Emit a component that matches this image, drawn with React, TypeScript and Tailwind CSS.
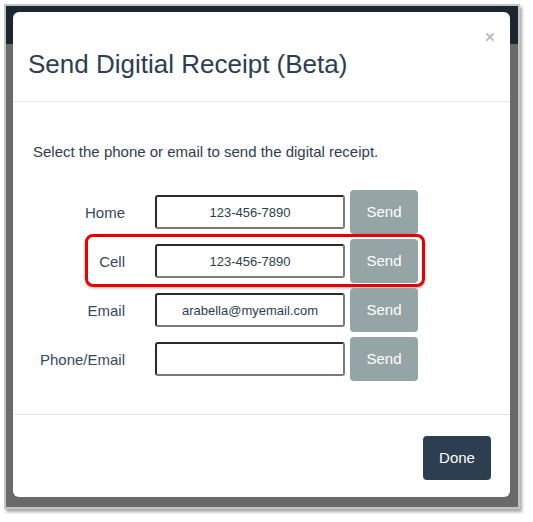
import { X } from 'lucide-react'

const ROWS = [
  { label: 'Home', value: '123-456-7890' },
  { label: 'Cell', value: '123-456-7890', marked: true },
  { label: 'Email', value: 'arabella@myemail.com' },
  { label: 'Phone/Email', value: '' },
]

function Row({ label, value, marked }: { label: string; value: string; marked?: boolean }) {
  return (
    <div className="relative flex items-center h-[44px]">
      {marked && (
        <div className="absolute left-[52px] top-[-5px] w-[340px] h-[53px] rounded-[8px] border-[3px] border-[#e60000] shadow-[0_1px_3px_rgba(0,0,0,0.35)] pointer-events-none" />
      )}
      <span className="w-[92px] text-right text-[15px] leading-[18px] pt-[2px] text-[#34495e]">{label}</span>
      <input
        readOnly
        value={value}
        className="ml-[30px] w-[190px] h-[34px] rounded-[3px] border-2 border-t-[#2b2b2b] border-l-[#2b2b2b] border-r-[#7a7a7a] border-b-[#7a7a7a] bg-white text-center text-[13px] text-[#2c3e50] outline-none"
      />
      <button className="ml-[5px] w-[68px] h-[44px] rounded-[4px] bg-[#95a5a6] text-[15px] text-white">
        Send
      </button>
    </div>
  )
}

export default function App() {
  return (
    <div className="w-[533px] h-[522px] bg-white font-['Liberation_Sans',Arial,sans-serif] pl-[4px] pt-[4px]">
      <div className="w-[516px] h-[505px] border-2 border-[#c4c4c4] bg-[linear-gradient(#1c2631_0_38px,#6a6a6a_38px)] shadow-[2px_3px_3px_rgba(0,0,0,0.35)] pl-[7px] pt-[6px]">
        <div className="w-[497px] h-[485px] bg-white rounded-[6px] flex flex-col">
          {/* header */}
          <div className="relative h-[90px] border-b border-[#e5e5e5] pl-[15px] pt-[37px]">
            <h4 className="text-[26px] leading-[30px] text-[#2c3e50]">Send Digitial Receipt (Beta)</h4>
            <X className="absolute right-[14px] top-[19px] w-[12px] h-[12px] text-[#bdbdbd]" strokeWidth={4} />
          </div>

          {/* body */}
          <div className="flex-1 pl-[20px] pt-[41px] flex flex-col">
            <p className="text-[15px] leading-[17px] text-[#2c3e50]">
              Select the phone or email to send the digital receipt.
            </p>
            <div className="mt-[30px] flex flex-col gap-[5px]">
              {ROWS.map(r => <Row key={r.label} {...r} />)}
            </div>
          </div>

          {/* footer */}
          <div className="h-[83px] border-t border-[#e5e5e5] flex justify-end items-start pt-[21px] pr-[19px]">
            <button className="w-[68px] h-[44px] rounded-[4px] bg-[#2c3e50] text-[15px] text-white">Done</button>
          </div>
        </div>
      </div>
    </div>
  )
}
